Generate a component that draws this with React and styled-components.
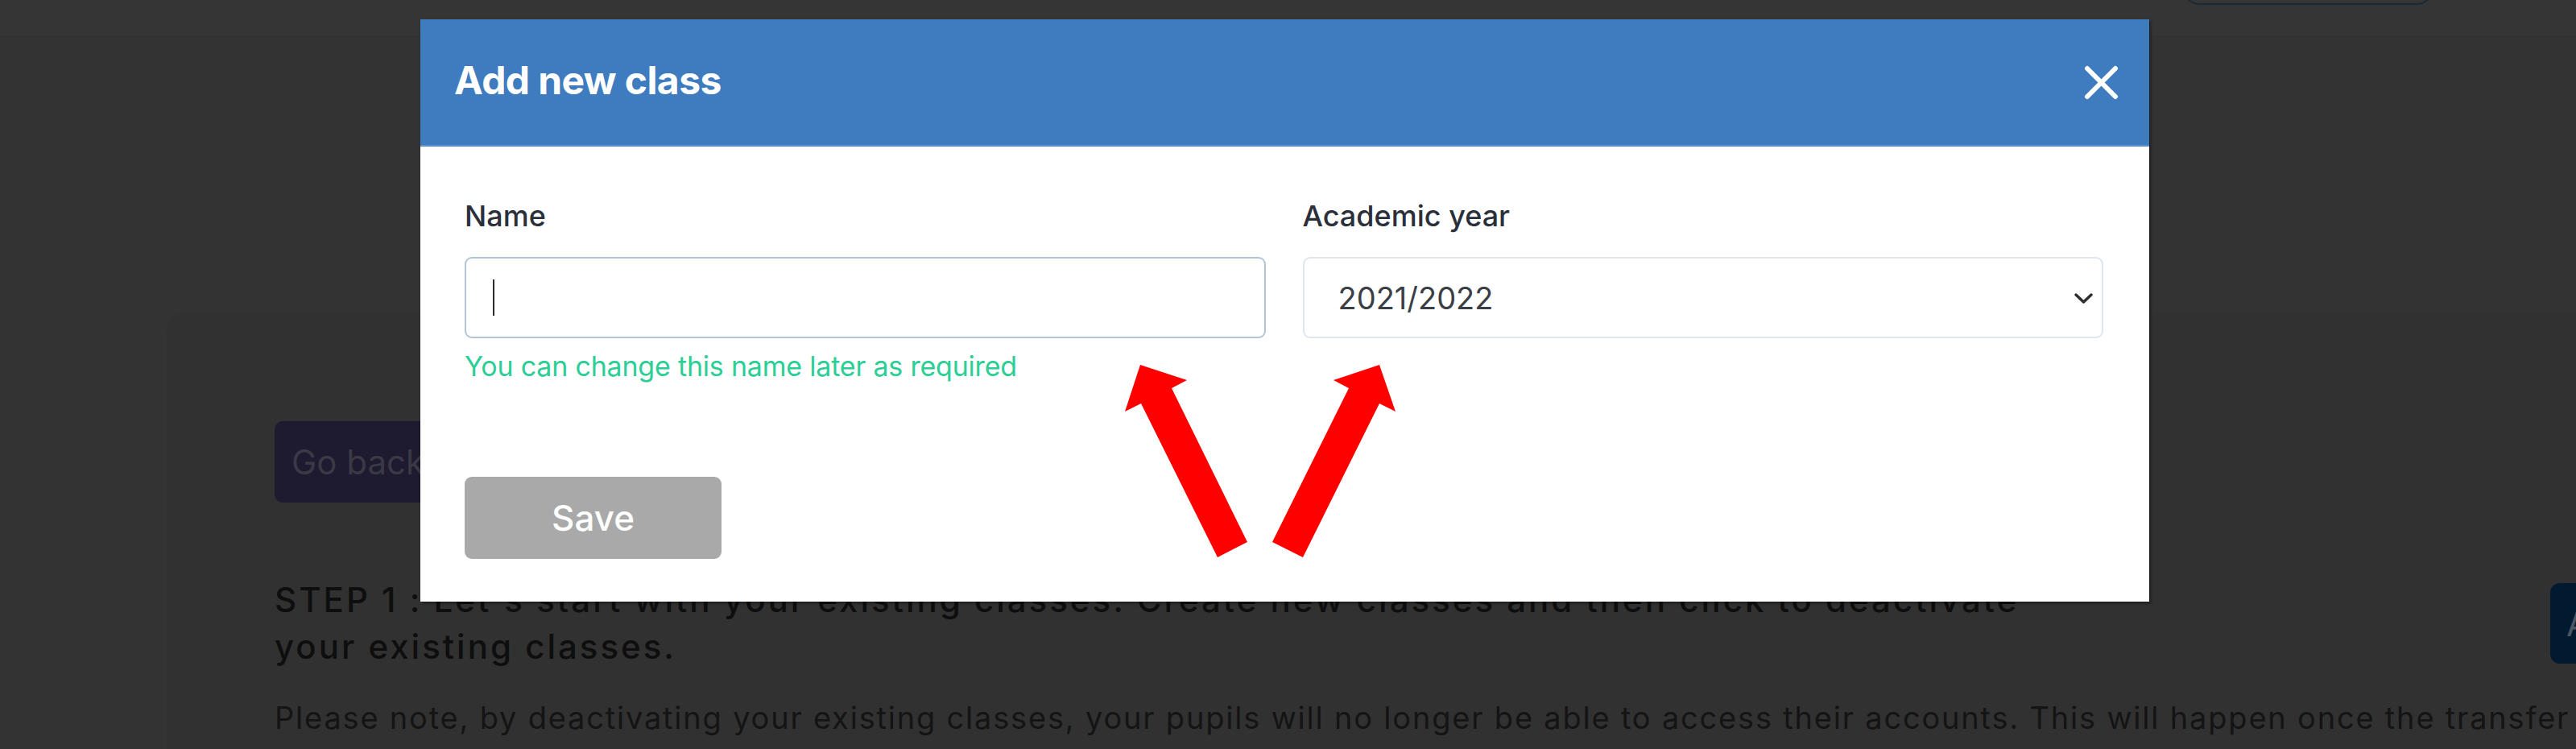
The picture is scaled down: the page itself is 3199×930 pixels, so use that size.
import React from 'react';
import styled, { createGlobalStyle } from 'styled-components';

const Global = createGlobalStyle`
  html, body {
    margin: 0;
    padding: 0;
    background: #333333;
  }
  body {
    font-family: Inter, "Noto Sans", "Liberation Sans", sans-serif;
  }
`;

const Page = styled.div`
  position: relative;
  width: 3199px;
  height: 930px;
  overflow: hidden;
  background: #333333;
`;

const TopBar = styled.div`
  height: 44px;
  border-bottom: 1px solid #313131;
  background: #353535;
  display: flex;
  justify-content: flex-end;
  padding-right: 176px;
`;

const OutlineButton = styled.div`
  width: 313px;
  height: 50px;
  margin-top: -44px;
  box-sizing: border-box;
  border: 2px solid #1c2935;
  border-radius: 22px;
`;

const Card = styled.div`
  margin: 343px -200px 0 207px;
  padding: 135px 0 0 134px;
  background: #313131;
  border-radius: 24px 0 0 0;
  height: 600px;
`;

const GoBack = styled.div`
  display: inline-flex;
  align-items: center;
  height: 101px;
  padding: 0 40px 0 21px;
  background: #1e1a30;
  border-radius: 10px;
  color: #3a3946;
  font-size: 42px;
`;

const StepRow = styled.div`
  display: grid;
  grid-template-columns: 2826px auto;
  margin-top: 92px;
`;

const StepTitle = styled.h3`
  margin: 0;
  font-size: 42px;
  line-height: 58px;
  font-weight: 500;
  letter-spacing: 3px;
  color: #0e0e0e;
  white-space: nowrap;
`;

const NavyButton = styled.div`
  margin-top: 8px;
  height: 100px;
  width: 260px;
  display: flex;
  align-items: center;
  padding-left: 20px;
  background: #021a30;
  border-radius: 12px;
  color: #4b5563;
  font-size: 42px;
`;

const Note = styled.p`
  margin: 36px 0 0;
  font-size: 38px;
  line-height: 46px;
  letter-spacing: 1.8px;
  color: #141414;
  white-space: nowrap;
`;

const Modal = styled.div`
  position: absolute;
  left: 522px;
  top: 24px;
  width: 2147px;
  background: #ffffff;
  box-shadow: 2px 2px 3px rgba(0, 0, 0, 0.45);
`;

const Header = styled.div`
  height: 158px;
  box-sizing: border-box;
  padding: 0 38px 0 42px;
  display: flex;
  align-items: center;
  justify-content: space-between;
  background: #3e7bbf;
  border-bottom: 2px solid #5b8fc9;
`;

const Title = styled.h2`
  margin: -5px 0 0;
  font-size: 48px;
  font-weight: 700;
  color: #ffffff;
  letter-spacing: -0.6px;
`;

const Close = styled.button`
  border: none;
  background: none;
  padding: 0;
  width: 43px;
  height: 43px;
  display: flex;
`;

const Body = styled.div`
  padding: 65px 57px 53px 55px;
`;

const Fields = styled.div`
  display: grid;
  grid-template-columns: 1fr 1fr;
  column-gap: 46px;
`;

const Field = styled.div`
  display: flex;
  flex-direction: column;
`;

const Label = styled.label`
  font-size: 36px;
  line-height: 43px;
  font-weight: 500;
  color: #2a2f3a;
  margin-bottom: 29px;
`;

const TextField = styled.div`
  height: 101px;
  box-sizing: border-box;
  border: 2px solid ${p => (p.$focused ? '#b2c5d8' : '#dfe6ed')};
  border-radius: 9px;
  display: flex;
  align-items: center;
  padding-left: 33px;
`;

const Caret = styled.span`
  width: 2px;
  height: 45px;
  background: #2b2b2b;
`;

const Helper = styled.div`
  margin-top: 14px;
  font-size: 34px;
  line-height: 41px;
  letter-spacing: -0.2px;
  color: #2bcf96;
`;

const SelectWrap = styled.div`
  position: relative;
`;

const Select = styled.select`
  width: 100%;
  height: 101px;
  box-sizing: border-box;
  border: 2px solid #dfe6ed;
  border-radius: 9px;
  appearance: none;
  background: #ffffff;
  padding: 0 42px;
  font-family: inherit;
  font-size: 38px;
  color: #3a3e45;
`;

const Chevron = styled.svg`
  position: absolute;
  right: 12px;
  top: 44px;
  pointer-events: none;
`;

const Footer = styled.div`
  margin-top: 117px;
`;

const SaveButton = styled.button`
  width: 319px;
  height: 102px;
  border: none;
  border-radius: 9px;
  background: #a9a9a9;
  color: #ffffff;
  font-family: inherit;
  font-size: 44px;
  font-weight: 500;
`;

const Arrows = styled.svg`
  position: absolute;
  left: 1390px;
  top: 445px;
`;

function App() {
  return (
    <Page>
      <Global />
      <TopBar>
        <OutlineButton />
      </TopBar>
      <Card>
        <GoBack>Go back</GoBack>
        <StepRow>
          <StepTitle>
            STEP 1 : Let's start with your existing classes. Create new classes and then click to deactivate
            <br />
            your existing classes.
          </StepTitle>
          <NavyButton>A</NavyButton>
        </StepRow>
        <Note>
          Please note, by deactivating your existing classes, your pupils will no longer be able to access their
          accounts. This will happen once the transfer
        </Note>
      </Card>

      <Modal>
        <Header>
          <Title>Add new class</Title>
          <Close aria-label="Close">
            <svg width="43" height="43" viewBox="0 0 43 43">
              <path d="M4 4 L39 39 M39 4 L4 39" stroke="#fff" strokeWidth="6" strokeLinecap="round" />
            </svg>
          </Close>
        </Header>
        <Body>
          <Fields>
            <Field>
              <Label>Name</Label>
              <TextField $focused>
                <Caret />
              </TextField>
              <Helper>You can change this name later as required</Helper>
            </Field>
            <Field>
              <Label>Academic year</Label>
              <SelectWrap>
                <Select defaultValue="2021/2022">
                  <option>2021/2022</option>
                  <option>2022/2023</option>
                </Select>
                <Chevron width="25" height="15" viewBox="0 0 25 15">
                  <path d="M3 3 L12.5 12 L22 3" fill="none" stroke="#2e2e2e" strokeWidth="3.5" strokeLinecap="round" strokeLinejoin="round" />
                </Chevron>
              </SelectWrap>
            </Field>
          </Fields>
          <Footer>
            <SaveButton>Save</SaveButton>
          </Footer>
        </Body>
      </Modal>

      <Arrows width="350" height="255" viewBox="0 0 350 255">
        <polygon points="26,8 84,27 65,37 159,228 122,247 27,56 7,66" fill="#ff0000" />
        <polygon points="323,8 266,27 285,37 190,228 228,247 323,56 343,66" fill="#ff0000" />
      </Arrows>
    </Page>
  );
}

export default App;
